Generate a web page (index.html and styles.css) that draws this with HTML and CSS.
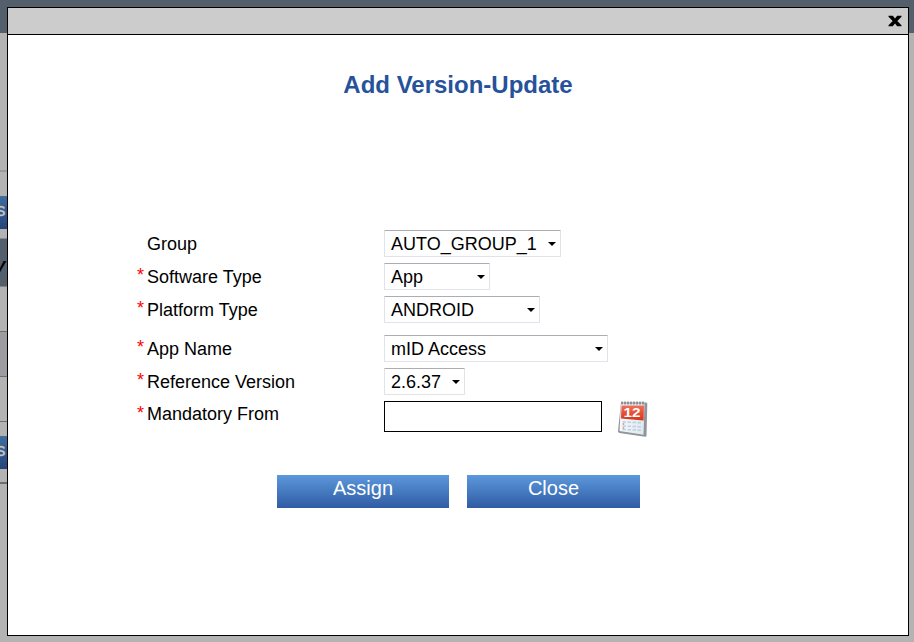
FILE: index.html
```html
<!DOCTYPE html>
<html lang="en">
<head>
<meta charset="utf-8">
<title>Add Version-Update</title>
<link rel="stylesheet" href="styles.css">
</head>
<body>
<div class="page">
  <div class="topbar"></div>
  <div class="gap-top"></div>
  <div class="rule"></div>
  <div class="gap-a"></div>
  <div class="strip-btn">s</div>
  <div class="gap-b"></div>
  <div class="table-head">y</div>
  <div class="row"></div>
  <div class="row alt"></div>
  <div class="row"></div>
  <div class="gap-c"></div>
  <div class="strip-btn">s</div>
  <div class="gap-d"></div>
  <div class="rule dark"></div>
</div>
<div class="dialog">
  <div class="dialog-bar">
    <svg class="close-x" viewBox="0 0 14 12" width="14" height="12"><path d="M.5 .8h4.300L7 3.600 9.200 .8h4.300v1L9.300 6l4.200 4.200v1H9.200L7 8.400l-2.200 2.800H.5v-1L4.700 6 .5 1.800z"/></svg>
  </div>
  <h1>Add Version-Update</h1>
  <div class="form">
    <div class="field"><span class="star"></span><label>Group</label><div class="select w-group">AUTO_GROUP_1<svg class="arrow" viewBox="0 0 8 4"><path d="M0 0h8L4 4z"/></svg></div></div>
    <div class="field"><span class="star">*</span><label>Software Type</label><div class="select w-software">App<svg class="arrow" viewBox="0 0 8 4"><path d="M0 0h8L4 4z"/></svg></div></div>
    <div class="field last-general"><span class="star">*</span><label>Platform Type</label><div class="select w-platform">ANDROID<svg class="arrow" viewBox="0 0 8 4"><path d="M0 0h8L4 4z"/></svg></div></div>
    <div class="field"><span class="star">*</span><label>App Name</label><div class="select w-app">mID Access<svg class="arrow" viewBox="0 0 8 4"><path d="M0 0h8L4 4z"/></svg></div></div>
    <div class="field"><span class="star">*</span><label>Reference Version</label><div class="select w-version">2.6.37<svg class="arrow" viewBox="0 0 8 4"><path d="M0 0h8L4 4z"/></svg></div></div>
    <div class="field date"><span class="star">*</span><label>Mandatory From</label><input type="text" class="date-input">
      <svg class="calendar" viewBox="0 0 32 38" width="32" height="38">
        <defs>
          <linearGradient id="red" x1="0" y1="0" x2="0" y2="1"><stop offset="0" stop-color="#f0705a"/><stop offset="1" stop-color="#d83018"/></linearGradient>
          <linearGradient id="sheet" x1="0" y1="0" x2="1" y2="0"><stop offset="0" stop-color="#f4f9fd"/><stop offset="1" stop-color="#dce8f1"/></linearGradient>
        </defs>
        <path d="M4 1.500h25q1.300 0 1.300 1.300L29.500 34.500q0 1.500-1.500 1.300L2.500 32Q.8 31.500 1 30z" fill="#8f959a"/>
        <path d="M4 2.500H27.500L26.500 33.700 2.500 30z" fill="url(#sheet)"/>
        <path d="M4.500 4.500H27l-.4 15L4 17.500z" fill="url(#red)"/>
        <path d="M5 .5v3M8 .5v3M11 .5v3M14 .5v3M17 .5v3M20 .5v3M23 .5v3M26 .5v3" stroke="#777d82" stroke-width="1.400"/>
        <text x="6.500" y="15.500" class="day" textLength="17" lengthAdjust="spacingAndGlyphs">12</text>
        <path d="M5.500 21h3.500m1.500.2h3.500m1.500.3h3.500m1.500.2h3.500M5.500 25h3.500m1.500.2h3.500m1.500.3h3.500m1.500.2h3.500M5.500 28.500h3.500m1.500.2h3.500m1.500.3h3.500m1.500.2h3.500" stroke="#c0d0dd" stroke-width="1.500"/>
        <path d="M6.500 22v2M6.500 26v2" stroke="#ee9a90" stroke-width="1.500"/>
      </svg>
    </div>
  </div>
  <div class="actions">
    <button class="btn">Assign</button>
    <button class="btn wide">Close</button>
  </div>
</div>
</body>
</html>
```

FILE: styles.css
```css
* { box-sizing: border-box; }
html, body { margin: 0; height: 100%; overflow: hidden; }
body { background: #b3b3b3; font-family: "Liberation Sans", Arial, sans-serif; font-size: 18px; color: #000; }
.page { width: 7px; height: 642px; }
.topbar { width: 914px; height: 33px; background: #535f6b; }
.gap-top { height: 137px; }
.rule { height: 2px; background: #96999e; }
.rule.dark { background: #6e6e6e; }
.gap-a { height: 24px; }
.strip-btn { width: 7px; height: 33px; padding-top: 3px; overflow: hidden; background: linear-gradient(#416d9f, #24437a); color: #c4c4c4; font-size: 19px; line-height: 22px; text-indent: -4px; -webkit-text-stroke: 0.3px #c4c4c4; }
.gap-b { height: 9px; }
.table-head { width: 7px; height: 49px; padding-top: 15px; overflow: hidden; background: #535f6b; border-top: 1px solid #858b92; border-bottom: 1px solid #7f858b; font-size: 19px; font-weight: bold; font-style: italic; line-height: 22px; text-indent: -5px; }
.row { height: 45px; border-bottom: 1px solid #6b7075; }
.row.alt { background: #9d9ca1; }
.gap-c { height: 14px; }
.gap-d { height: 13px; }

.dialog { position: absolute; left: 7px; top: 7px; width: 902px; height: 629px; border: 1px solid #000; background: #fff; }
.dialog-bar { display: flex; justify-content: flex-end; height: 27px; padding: 7px 6px 0 0; background: #ccc; border-bottom: 1px solid #000; }
.close-x { display: block; }
h1 { margin: 36px 0 0; color: #26529b; font-size: 24px; line-height: 28px; font-weight: bold; text-align: center; }
.form { display: flex; flex-direction: column; gap: 6px; margin: 131px 0 0 129px; }
.field { display: flex; height: 27px; }
.last-general { margin-bottom: 6px; }
.star { width: 10px; color: #f00; line-height: 25px; }
label { width: 237px; line-height: 28px; }
.select { display: flex; align-items: center; justify-content: space-between; height: 27px; padding: 1px 4px 0 6px; border: 1px solid #e2e3ea; border-top-color: #abadb3; border-radius: 1px; line-height: 24px; white-space: nowrap; }
.arrow { flex: none; width: 8px; height: 4px; }
.w-group { width: 177px; }
.w-software { width: 106px; }
.w-platform { width: 156px; }
.w-app { width: 224px; }
.w-version { width: 81px; }
.date { height: 38px; }
.date .star { line-height: 24px; }
.date label { line-height: 26px; }
.date-input { width: 218px; height: 31px; margin: 0; padding: 0 5px; border: 1px solid #000; background: #fff; font: inherit; }
.calendar { flex: none; margin-left: 15px; }
.day { fill: #fff; font-size: 12px; font-weight: bold; }
.actions { display: flex; gap: 18px; margin: 36px 0 0 269px; }
.btn { width: 172px; height: 33px; margin: 0; padding: 0 0 7px; border: 0; background: linear-gradient(#5c98db, #305ca4); color: #fff; font-family: inherit; font-size: 20px; line-height: 26px; }
.btn.wide { width: 173px; }
```
